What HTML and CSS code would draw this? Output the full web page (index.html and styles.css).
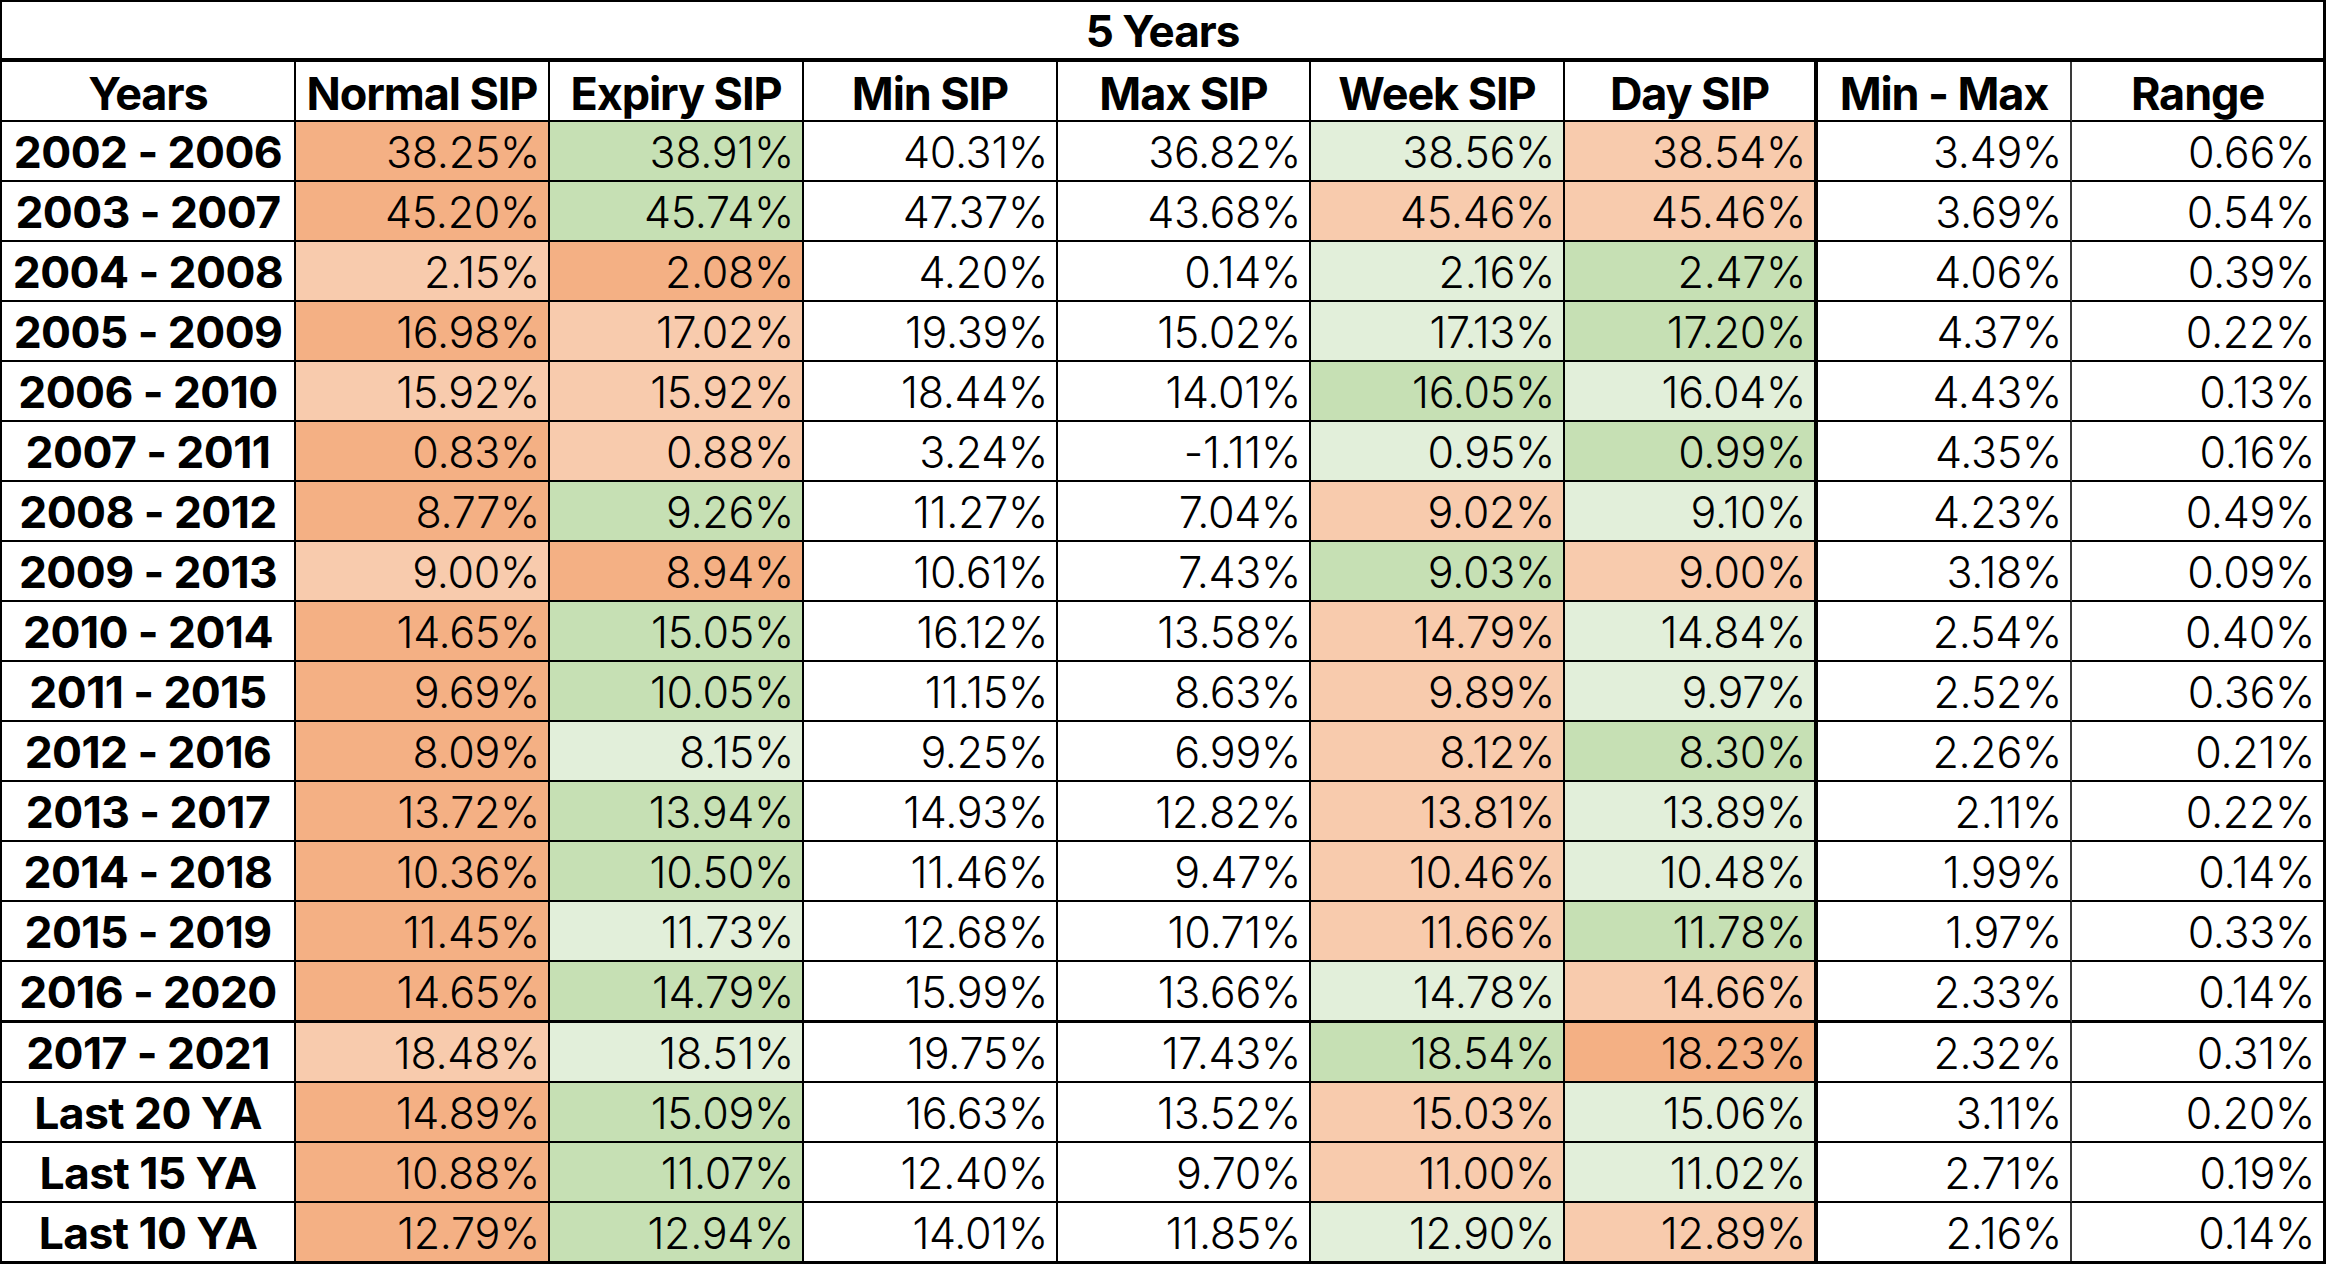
FILE: index.html
```html
<!DOCTYPE html>
<html lang="en">
<head>
<meta charset="utf-8">
<title>5 Years SIP</title>
<link rel="stylesheet" href="styles.css">
</head>
<body>
<div class="sheet">
  <div class="c title">5 Years</div>

  <div class="c h">Years</div>
  <div class="c h">Normal SIP</div>
  <div class="c h">Expiry SIP</div>
  <div class="c h">Min SIP</div>
  <div class="c h">Max SIP</div>
  <div class="c h">Week SIP</div>
  <div class="c h thick">Day SIP</div>
  <div class="c h thin">Min - Max</div>
  <div class="c h last">Range</div>

  <div class="c y">2002 - 2006</div><div class="c n d">38.25%</div><div class="c n g">38.91%</div><div class="c n">40.31%</div><div class="c n">36.82%</div><div class="c n lg">38.56%</div><div class="c n l thick">38.54%</div><div class="c n thin">3.49%</div><div class="c n last">0.66%</div>
  <div class="c y">2003 - 2007</div><div class="c n d">45.20%</div><div class="c n g">45.74%</div><div class="c n">47.37%</div><div class="c n">43.68%</div><div class="c n l">45.46%</div><div class="c n l thick">45.46%</div><div class="c n thin">3.69%</div><div class="c n last">0.54%</div>
  <div class="c y">2004 - 2008</div><div class="c n l">2.15%</div><div class="c n d">2.08%</div><div class="c n">4.20%</div><div class="c n">0.14%</div><div class="c n lg">2.16%</div><div class="c n g thick">2.47%</div><div class="c n thin">4.06%</div><div class="c n last">0.39%</div>
  <div class="c y">2005 - 2009</div><div class="c n d">16.98%</div><div class="c n l">17.02%</div><div class="c n">19.39%</div><div class="c n">15.02%</div><div class="c n lg">17.13%</div><div class="c n g thick">17.20%</div><div class="c n thin">4.37%</div><div class="c n last">0.22%</div>
  <div class="c y">2006 - 2010</div><div class="c n l">15.92%</div><div class="c n l">15.92%</div><div class="c n">18.44%</div><div class="c n">14.01%</div><div class="c n g">16.05%</div><div class="c n lg thick">16.04%</div><div class="c n thin">4.43%</div><div class="c n last">0.13%</div>
  <div class="c y">2007 - 2011</div><div class="c n d">0.83%</div><div class="c n l">0.88%</div><div class="c n">3.24%</div><div class="c n">-1.11%</div><div class="c n lg">0.95%</div><div class="c n g thick">0.99%</div><div class="c n thin">4.35%</div><div class="c n last">0.16%</div>
  <div class="c y">2008 - 2012</div><div class="c n d">8.77%</div><div class="c n g">9.26%</div><div class="c n">11.27%</div><div class="c n">7.04%</div><div class="c n l">9.02%</div><div class="c n lg thick">9.10%</div><div class="c n thin">4.23%</div><div class="c n last">0.49%</div>
  <div class="c y">2009 - 2013</div><div class="c n l">9.00%</div><div class="c n d">8.94%</div><div class="c n">10.61%</div><div class="c n">7.43%</div><div class="c n g">9.03%</div><div class="c n l thick">9.00%</div><div class="c n thin">3.18%</div><div class="c n last">0.09%</div>
  <div class="c y">2010 - 2014</div><div class="c n d">14.65%</div><div class="c n g">15.05%</div><div class="c n">16.12%</div><div class="c n">13.58%</div><div class="c n l">14.79%</div><div class="c n lg thick">14.84%</div><div class="c n thin">2.54%</div><div class="c n last">0.40%</div>
  <div class="c y">2011 - 2015</div><div class="c n d">9.69%</div><div class="c n g">10.05%</div><div class="c n">11.15%</div><div class="c n">8.63%</div><div class="c n l">9.89%</div><div class="c n lg thick">9.97%</div><div class="c n thin">2.52%</div><div class="c n last">0.36%</div>
  <div class="c y">2012 - 2016</div><div class="c n d">8.09%</div><div class="c n lg">8.15%</div><div class="c n">9.25%</div><div class="c n">6.99%</div><div class="c n l">8.12%</div><div class="c n g thick">8.30%</div><div class="c n thin">2.26%</div><div class="c n last">0.21%</div>
  <div class="c y">2013 - 2017</div><div class="c n d">13.72%</div><div class="c n g">13.94%</div><div class="c n">14.93%</div><div class="c n">12.82%</div><div class="c n l">13.81%</div><div class="c n lg thick">13.89%</div><div class="c n thin">2.11%</div><div class="c n last">0.22%</div>
  <div class="c y">2014 - 2018</div><div class="c n d">10.36%</div><div class="c n g">10.50%</div><div class="c n">11.46%</div><div class="c n">9.47%</div><div class="c n l">10.46%</div><div class="c n lg thick">10.48%</div><div class="c n thin">1.99%</div><div class="c n last">0.14%</div>
  <div class="c y">2015 - 2019</div><div class="c n d">11.45%</div><div class="c n lg">11.73%</div><div class="c n">12.68%</div><div class="c n">10.71%</div><div class="c n l">11.66%</div><div class="c n g thick">11.78%</div><div class="c n thin">1.97%</div><div class="c n last">0.33%</div>
  <div class="c y sep">2016 - 2020</div><div class="c n d sep">14.65%</div><div class="c n g sep">14.79%</div><div class="c n sep">15.99%</div><div class="c n sep">13.66%</div><div class="c n lg sep">14.78%</div><div class="c n l thick sep">14.66%</div><div class="c n thin sep">2.33%</div><div class="c n last sep">0.14%</div>
  <div class="c y">2017 - 2021</div><div class="c n l">18.48%</div><div class="c n lg">18.51%</div><div class="c n">19.75%</div><div class="c n">17.43%</div><div class="c n g">18.54%</div><div class="c n d thick">18.23%</div><div class="c n thin">2.32%</div><div class="c n last">0.31%</div>
  <div class="c y">Last 20 YA</div><div class="c n d">14.89%</div><div class="c n g">15.09%</div><div class="c n">16.63%</div><div class="c n">13.52%</div><div class="c n l">15.03%</div><div class="c n lg thick">15.06%</div><div class="c n thin">3.11%</div><div class="c n last">0.20%</div>
  <div class="c y">Last 15 YA</div><div class="c n d">10.88%</div><div class="c n g">11.07%</div><div class="c n">12.40%</div><div class="c n">9.70%</div><div class="c n l">11.00%</div><div class="c n lg thick">11.02%</div><div class="c n thin">2.71%</div><div class="c n last">0.19%</div>
  <div class="c y end">Last 10 YA</div><div class="c n d end">12.79%</div><div class="c n g end">12.94%</div><div class="c n end">14.01%</div><div class="c n end">11.85%</div><div class="c n lg end">12.90%</div><div class="c n l thick end">12.89%</div><div class="c n thin end">2.16%</div><div class="c n last end">0.14%</div>
</div>
</body>
</html>
```
FILE: styles.css
```css
* { box-sizing: border-box; }
html, body { margin: 0; padding: 0; background: #ffffff; }

.sheet {
  display: grid;
  width: 2326px;
  grid-template-columns: 294px 254px 254px 254px 253px 254px 253px 254px 251px;
  grid-template-rows: 60px 60px repeat(14, 60px) 61px repeat(3, 60px) 58px;
  border-left: 2px solid #000;
  border-top: 2px solid #000;
  border-right: 3px solid #000;
  border-bottom: 3px solid #000;
  font-family: "Inter", "Liberation Sans", sans-serif;
  color: #000;
  background: #fff;
}

.c {
  display: flex;
  align-items: center;
  border-right: 2px solid #000;
  border-bottom: 2px solid #000;
  overflow: hidden;
  white-space: nowrap;
}

.title {
  grid-column: 1 / -1;
  justify-content: center;
  border-right: none;
  border-bottom: 4px solid #000;
  font-size: 44px;
  font-weight: 700;
  letter-spacing: -1px;
  padding-top: 2px;
}

.h {
  justify-content: center;
  font-size: 45px;
  font-weight: 700;
  letter-spacing: -1.1px;
  padding-top: 5px;
}

.y {
  justify-content: center;
  font-size: 44.5px;
  font-weight: 700;
  letter-spacing: -0.6px;
  padding-top: 2px;
}

.n {
  justify-content: flex-end;
  font-size: 43px;
  font-weight: 300;
  letter-spacing: -0.3px;
  padding-right: 8px;
  padding-top: 2px;
}

.thick { border-right-width: 4px; }
.thin { border-right: 2px solid #3a3a3a; }
.last { border-right: none; }
.sep { border-bottom-width: 3px; }
.end { border-bottom: none; }

.d { background: #f4b084; }
.l { background: #f8cbad; }
.g { background: #c6e0b4; }
.lg { background: #e2efda; }
```
